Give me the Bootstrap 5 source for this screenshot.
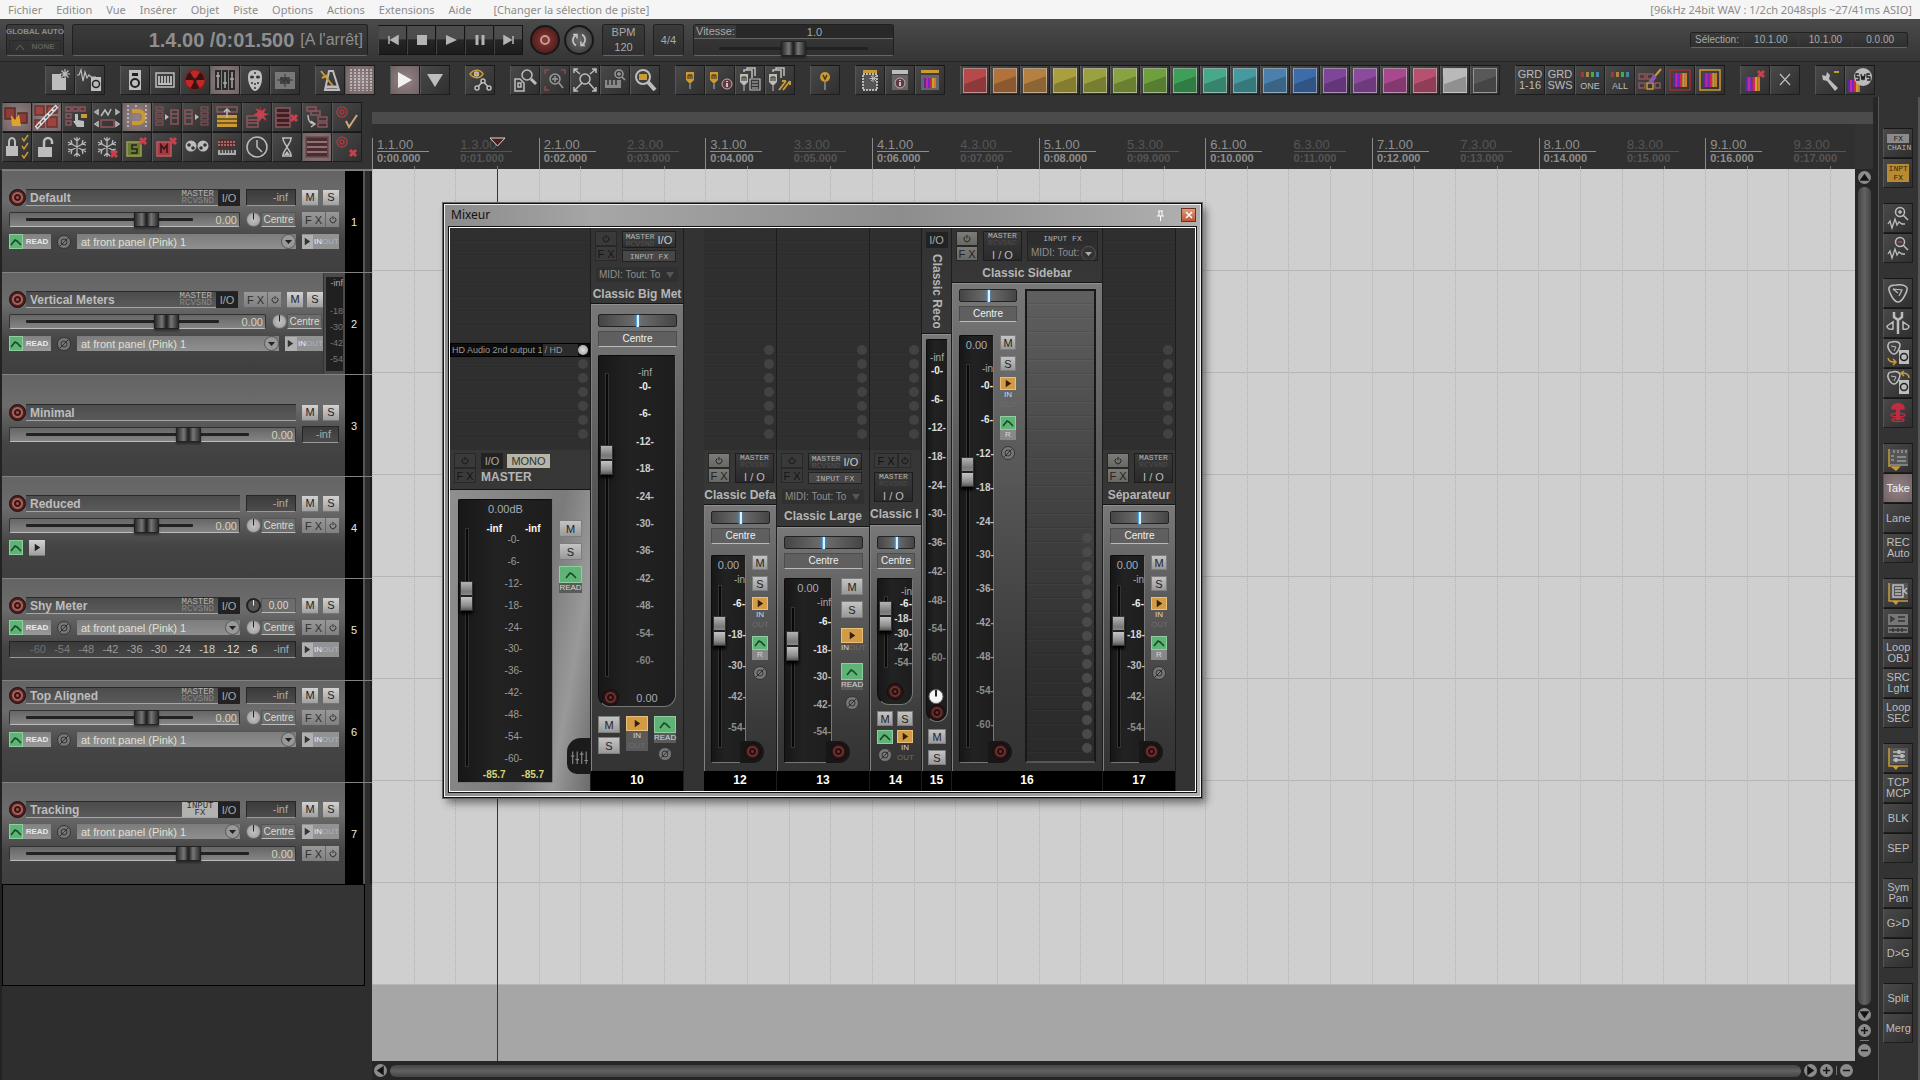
<!DOCTYPE html>
<html lang="fr">
<head>
<meta charset="utf-8">
<meta name="viewport" content="width=device-width, initial-scale=1">
<title>Mixeur</title>
<link href="https://cdn.jsdelivr.net/npm/bootstrap@5.3.0/dist/css/bootstrap.min.css" rel="stylesheet">
<style>
body{background:#333;color:#aaa;font-family:"Liberation Sans",Arial,sans-serif;font-size:11px;line-height:12px;overflow:hidden}
button,input,select{font:inherit;color:inherit;margin:0;padding:0;border:0;background:none;border-radius:0}
button{display:flex;align-items:center;justify-content:center;flex:none;white-space:nowrap}
svg{display:block;flex:none}
.minh0{min-height:0}.minw0{min-width:0}
.menu{background:#f5f5f5;height:19px;font-family:"Noto Sans",sans-serif;padding:0 8px;gap:14px}
.menu a,.menu span{color:#8c8c8c;text-decoration:none;font-size:11px;line-height:19px}
/* transport */
.transport{background:linear-gradient(#4a4a4a,#353535);height:43px;padding:0 12px 0 6px;border-bottom:1px solid #262626}
.inset{background:linear-gradient(#3b3b3b,#2f2f2f);border:1px solid #202020;border-bottom-color:#666;border-radius:3px}
.gauto{width:58px;height:32px;font-size:8px;font-weight:bold;color:#8d8d8d;white-space:nowrap;line-height:10px}
.gauto button{width:52px;height:13px;border:1px solid #2b2b2b;color:#5f5f5f;gap:6px}
.clock{width:296px;height:32px;font-size:20px;font-weight:bold;color:#8e8e8e;padding-right:4px}
.clock small{font-size:16px;font-weight:normal;margin-left:6px}
.tbar{margin:0 7px 0 10px}
.tbar button{width:29px;height:30px;background:linear-gradient(#4c4c4c 45%,#262626 50%,#1c1c1c);border:1px solid #151515;border-left-color:#444;color:#b4b4b4}
.round{width:30px;height:30px;border-radius:50%;border:2px solid #181818;background:radial-gradient(#6a6a6a,#333);color:#c4c4c4}
.round.red{background:radial-gradient(#8a3a36,#3c1412);color:#c59b98}
.bpm{width:43px;height:32px;line-height:15px}
.sig{width:31px;height:32px;margin-left:8px}
.rate{width:201px;height:32px;margin-left:9px}
.rate .top{background:#292929;height:14px;border-bottom:1px solid #666;margin-bottom:2px}
.rate .top label{width:42px;background:#3a3a3a;height:13px;padding-left:2px}
.selbox{width:218px;height:16px;font-size:10px}
.selbox output{flex:1;border-left:1px solid #3d3d3d;text-align:center}
/* toolbars */
.tools{height:35px;padding:3px 0 0 45px;gap:15px}
.tb{width:30px;height:30px;background:linear-gradient(135deg,#494949,#2f2f2f);border:1px solid #1d1d1d;border-top-color:#161616;border-left-color:#565656;color:#bdbdbd;font-size:11px;line-height:11px;text-align:center;white-space:normal}
.tb.on{background:radial-gradient(#968486,#706264);color:#f2f2f2}
.sw span{width:24px;height:25px;border:1px solid #cfcfcf88;display:block;background:linear-gradient(160deg,transparent 48%,#00000038 50%),var(--c)}
.left{width:372px;background:#2e2e2e}
.ltools{padding:5px 0 0 2px;height:72px;background:#333;display:grid;grid-template-columns:repeat(12,30px);align-content:start}
/* track control panel */
.tcp{border-left:2px solid #222;border-top:1px solid #777}
.track{height:102px;border-top:1px solid #828282}
.tbody{width:343px;background:linear-gradient(#646464,#6c6c6c 30%,#444 68%,#3f3f3f);padding-left:7px}
.tnum{width:18px;background:#000;color:#e8e8e8}
.tsep{width:9px;background:#2c2c2c;border-left:2px solid #555;border-right:2px solid #1c1c1c}
.trow{height:17px;gap:6px}
.tl{width:287px;gap:6px}.tr{width:37px}
.vm .tl{width:270px}.vm .panrow .tl{width:257px}
.vm .inb{width:38px}
.rec{width:17px;height:17px;border-radius:50%;background:radial-gradient(circle,#94514d 0 1px,#3c1614 2px 3px,#a5605b 4px 5px,#4e1f1d 6px);border:1px solid #170c0c;flex:none}
.rec.dk{background:radial-gradient(circle,#6a302e 0 1px,#241010 2px 3px,#6a302e 4px 5px,#2b1414 6px)}
.tname{flex:1;min-width:0;height:17px;background:linear-gradient(#4c4c4c,#5a5a5a);border-top:1px solid #2a2a2a;border-bottom:1px solid #a5a5a5}
.tname input{flex:1;min-width:0;width:60px;font-size:12px;font-weight:bold;color:#bdbdbd;padding-left:4px;height:15px}
.pix{font-family:"Liberation Mono",monospace;font-size:9px;line-height:7px;display:block;color:#b4b4b4}
.dim{color:#555}
.tname .dim{color:#888}
.iob{width:22px;height:16px;background:#222;color:#a9a9a9;font-size:11px}
.ifx{width:36px;height:15px;background:#b2b2b2}.ifx .pix{color:#333}
.tmeter{width:50px;height:17px;background:linear-gradient(#3b3b3b,#4c4c4c);border:1px solid #262626;border-bottom-color:#999;text-align:right;padding-right:7px;line-height:15px;flex:none}
.tmeter.tr{width:37px}
.ms{width:16px;height:16px;background:linear-gradient(#d2d2d2,#a0a0a0);color:#222;font-size:11px;border-bottom:1px solid #777}
.fx{background:linear-gradient(#999,#808080);color:#2f2f2f;height:15px;width:24px;font-size:11px;border-right:1px solid #666}
.pw{background:linear-gradient(#999,#808080);color:#2f2f2f;height:15px;width:13px}
.tslide{flex:1;height:15px;border:1px solid #333;border-bottom-color:#bbb;background:linear-gradient(#666,#848484);padding:0 2px 0 16px;border-radius:2px;color:#d3d3b8}
.tslide output{width:44px;text-align:right}
.tslide input{flex:1;min-width:0}
input[type=range]{-webkit-appearance:none;appearance:none}
.hr::-webkit-slider-runnable-track{height:3px;background:#222;border-radius:1px}
.hr{height:15px}
.hr::-webkit-slider-thumb{-webkit-appearance:none;width:25px;height:15px;margin-top:-6px;background:linear-gradient(90deg,#2b2b2b,#777 30%,#222 48% 52%,#777 70%,#2b2b2b);border:1px solid #222;box-shadow:0 2px 2px #0006}
.knob{width:15px;height:15px;border-radius:50%;background:linear-gradient(90deg,transparent 46%,#222 46% 54%,transparent 54%) top/100% 50% no-repeat,radial-gradient(#c2c2c2,#9c9c9c);border:1px solid #6a6a6a;flex:none}
.knob.dk{background:linear-gradient(90deg,transparent 46%,#eee 46% 54%,transparent 54%) top/100% 50% no-repeat,#555;border:2px solid #222}
.knob.wh{background:linear-gradient(90deg,transparent 46%,#222 46% 54%,transparent 54%) top/100% 50% no-repeat,#f4f4f4}
.panbox{width:50px;flex:none}
.panval{flex:1;min-width:0;height:15px;border:1px solid #555;border-bottom-color:#bbb;background:#6d6d6d;color:#dcdcc8;text-align:center;line-height:13px;font-size:10px}
.env{width:14px;height:15px;background:#5fb377;color:#174a26;border:1px solid #8fcf9d}
.readl{height:15px;width:28px;background:linear-gradient(#828282,#999);color:#e8e8e8;font-weight:bold;font-size:8px;text-align:center;line-height:15px}
.phase{width:14px;height:14px;border-radius:50%;border:1px solid #333;background:#777;color:#333}
.inp{flex:1;min-width:0;height:15px;position:relative;background:linear-gradient(#7c7c7c,#8f8f8f)}
.inp select{-webkit-appearance:none;appearance:none;width:100%;height:15px;padding:0 16px 0 4px;color:#e0e0d0}
.inp svg{position:absolute;right:0;top:0;pointer-events:none}
.inb{width:37px;height:15px;background:#929292;color:#eee;font-size:8px;justify-content:flex-start}
.inb i{width:12px;height:14px;background:#b0b0b0;color:#333;margin-right:1px}
.inb u{text-decoration:none;color:#b3b3b3}
.shy{flex:1;height:17px;background:linear-gradient(#393939,#464646);border:1px solid #222;border-bottom-color:#999;padding:0 6px 0 20px;line-height:15px}
.vmeter{width:22px;background:#4b4b4b;border-left:1px solid #333;padding:4px 2px}
.vmeter div{background:#202020;height:94px;font-size:9px;color:#777;text-align:right}
.vmeter span:first-child{color:#aaa}
.spare{height:102px;width:363px;background:#343434;border:1px solid #000}
/* ruler and arrange */
.band{height:12px;background:#4b4b4b;margin-top:15px}
.ruler{height:45px;background:#303030;margin-right:18px;overflow:hidden;padding-top:14px}
.rcell{flex:none;width:calc(1000px / 12);padding:0 0 0 4px;border-left:1px solid transparent;color:#555;white-space:nowrap;background:linear-gradient(#777,#777) 50% 100%/1px 3px no-repeat}
.rcell b{display:block;font-weight:normal;font-size:13px;line-height:13px;border-bottom:1px solid;width:52px}
.rcell em{font-style:normal;font-weight:bold;font-size:11px;line-height:12px;display:block}
.rcell.maj{color:#8e8e8e;border-left-color:#8a8a8a}
.arr{background:#a6a6a6}
.lane{height:102px;background:#cfcfcf;border-bottom:1px solid #b6b6b6}
.cols span{flex:none;width:calc(500px / 12);border-left:1px dotted #b2b2b2}
.cur{left:125px;width:1px;background:#5c2626}
.curtri{left:117px;top:13px}
.vs{width:18px;background:#262626;padding:2px 0 4px;gap:3px}
.hs{height:19px;background:#262626;padding:0 20px 0 2px;gap:3px}
.bar-v{flex:1;width:13px;border-radius:6px;background:linear-gradient(90deg,#444,#626262,#444)}
.bar-h{flex:1;height:12px;border-radius:6px;background:linear-gradient(#444,#626262,#444)}
.sep-h{width:9px;height:1px;background:#777}.sep-v{width:1px;height:9px;background:#777}
.sb{width:13px;height:13px;border-radius:50%;background:#8b8b8b;color:#151515}
.right{width:47px;background:#333;border-left:5px solid #262626;border-right:2px solid #555;box-shadow:inset 1px 0 #555;padding-top:31px;gap:15px}
.pk2{line-height:8px}
.pk2 .pix{width:22px;line-height:9px;font-size:8px}
.pk2.g .pix:first-child{background:#8b8b8b;color:#222}
.pk2.y .pix{background:#b88a34;color:#3a2808}
.cap{font-size:9px}
/* mixer window */
.mix{left:71px;top:34px;width:759px;height:595px;background:linear-gradient(90deg,#8b8b8b,#a6a6a6 20%,#8d8d8d 60%,#b0b0b0);border:1px solid #111;box-shadow:0 0 0 1px #666,4px 5px 8px #0007;padding:1px 5px 6px;outline:1px solid #eee;outline-offset:-2px}
.mtitle{height:22px;color:#111;font-size:12px;line-height:18px;font-family:"Noto Sans",sans-serif;padding:0 0 2px 2px}
.mtitle .x{width:15px;height:14px;background:linear-gradient(#dd9a80,#c25634);border:1px solid #70311d;color:#fff}
.mbody{height:565px;border:1px solid #fff;outline:1px solid #111;background:#333;overflow:hidden}
.strip{flex:none;border-right:1px solid #1d1d1d;background:#333}
.head{height:var(--head);flex:none;background:linear-gradient(#333,#373737);border-bottom:1px solid #151515;overflow:hidden}
.slots{height:222px;flex:none;background:repeating-linear-gradient(#2f2f2f 0 12px,#282828 13px,#3a3a3a 14px);padding-top:115px}
.send{height:14px;padding-right:2px;color:#999;font-size:10px;white-space:nowrap}
.dot{width:10px;height:10px;border-radius:50%;background:#424242;flex:none}
.dot.on{background:radial-gradient(#ddd,#999)}
.send.used{background:#0d0d0d;border:1px solid #000;padding:0 1px 0 1px;font-size:9px}
.send.used span:nth-child(2){background:#2b2b2b;flex:1;padding-left:2px}
.ctl{padding:3px 4px 0;gap:5px}
.fxv button{width:22px;height:15px;font-size:11px;background:#3a3a3a;color:#151515;border:1px solid #282828}
.fxv.on button{background:linear-gradient(#7b7b78,#686865);color:#222}
.fx.off,.pw.off{background:#3a3a3a;color:#111;border:1px solid #282828}
.route{width:39px;height:30px;background:linear-gradient(#3a3a3a,#2a2a2a);border:1px solid #1d1d1d;flex-direction:column;color:#bbb}
.route .pix{font-size:8px}.route .dim{color:#4c4c4c;margin-bottom:3px}
.wroute{width:54px;height:17px;background:linear-gradient(#454545,#2f2f2f);border:1px solid #1d1d1d;color:#ccc;gap:3px}
.wroute .pix,.wfx .pix,.sfx .pix{font-size:8px}
.wfx{width:54px;height:12px;background:#474747;border:1px solid #222;margin-top:2px}
.sfx{background:#2d2d2d;border:1px solid #222;width:73px;height:30px}
.sfx button{height:13px}
.mono{width:43px;height:14px;background:#b5b5a8;color:#333}
.midi{height:15px;background:#303030;margin:5px 5px 0;color:#8f8f8f;position:relative;overflow:hidden;font-size:10px}
.midi select{-webkit-appearance:none;appearance:none;width:100%;padding:0 15px 0 3px;height:15px;overflow:hidden}
.midi svg{position:absolute;right:1px;top:1px;pointer-events:none}
.sname{font-size:12px;font-weight:bold;color:#b5b5b5;line-height:16px;white-space:nowrap;overflow:hidden;margin:4px 0 0;text-align:center}
.sname.st{text-align:left}
.sname.vt{writing-mode:vertical-rl;height:74px;text-align:left;margin:6px 0 0}
.pan{flex:1;min-height:0;background:linear-gradient(#787878,#5a5a5a 35%,#3a3a3a 80%,#333);border-left:1px solid #808080;border-top:1px solid #909090;padding:var(--pt) 6px 8px}
.pans{height:13px;width:100%;border:1px solid #222;border-radius:2px;background:linear-gradient(90deg,#454545,#6e6e6e,#454545);flex:none}
.pans::-webkit-slider-thumb{-webkit-appearance:none;width:3px;height:12px;background:#dff0ff;box-shadow:0 0 3px #2f9be8;border-left:1px solid #4aa4e6}
.cen{height:16px;margin-top:4px;width:100%;border:1px solid #4c4c4c;border-bottom-color:#bbb;background:#5f5f5f;color:#f0f0f0;text-align:center;line-height:14px;flex:none;font-size:10px}
.mrow{flex:1;min-height:0;margin-top:var(--gap);gap:6px}
.mbox{width:var(--w);background:linear-gradient(90deg,#171717,#222 40%,#1d1d1d);border:1px solid #0c0c0c;border-right-color:#777;border-bottom-color:#777;position:relative;border-radius:2px;flex:none}
.mbox.bot{border-radius:2px 2px 12px 12px}
.rd{height:19px;line-height:18px;text-align:center;color:#a3acb8}
.fcol{flex:none;width:16px;padding:var(--ft) 0 var(--fb)}
.fader{writing-mode:vertical-lr;direction:rtl;width:15px;height:100%;min-height:0;display:block}
.fader::-webkit-slider-runnable-track{width:4px;background:#080808;border:1px solid #333}
.fader::-webkit-slider-thumb{-webkit-appearance:none;width:13px;height:30px;margin-left:-6px;background:linear-gradient(#b4b4b4,#777 35%,#8a8a8a 47%,#222 48% 52%,#c5c5c5 53%,#8d8d8d 85%,#5a5a5a);border:1px solid #333;box-shadow:0 3px 3px #000}
.scol{flex:1;min-width:0;padding:var(--it) 0 var(--sb);color:#aaa;font-size:10px}
.scale{flex:1;margin-top:var(--st);min-height:0}
.scale span{font-weight:bold}
.bump{position:absolute;right:-19px;bottom:-1px;width:24px;height:22px;border-radius:0 11px 11px 0;background:#171717;padding:2px 4px}
.foot{height:23px;padding-left:3px}
.side{gap:6px;width:16px}
.side.wd{width:22px}
.m1{width:100%;height:15px;background:linear-gradient(#c4c4c4,#999);color:#222;border:1px solid #7d7d7d;font-size:11px}
.m2 .m1{height:17px}
.pl{width:100%;height:13px;background:#d39b45;color:#33200a;border:1px solid #e8c07c}
.gr{width:100%;height:14px;background:#5fb377;color:#174a26;border:1px solid #8fcf9d}
.m2 .pl{height:15px}.m2 .gr{height:17px}
.tag{display:block;text-align:center;font-size:8px;line-height:10px;color:#d8d8d8}
.tag.o{color:#6d6d6d}.tag.bg{background:#5a5a5a}.tag.bl{background:#888}
.num{height:20px;background:#000;color:#fff;font-weight:bold;font-size:12px;line-height:19px;text-align:center;flex:none}
.side .phase,.brow .phase{margin:0 auto}
.brow{gap:6px;margin-top:9px;height:47px}
.brow>div{width:22px}
.bgrid{margin-top:6px;height:52px;display:grid;grid-template-columns:16px 16px;gap:4px;align-content:start}
.bgrid .phase{margin:0 auto}
.m15{gap:6px;margin:7px -1px -2px}
.w15{margin:0 -3px}
.mpan{background:linear-gradient(100deg,#8f8f8f,#7b7b7b 60%,#999 80%,#6b6b6b);padding:9px 6px 8px 8px;gap:6px}
.mpan .side{padding-top:21px;width:23px}
.mpan .scale span{font-weight:normal;color:#9c9c9c}
.peak{color:#d8d27a}
.fold{position:absolute;right:0;bottom:17px;width:23px;height:36px;background:#1b1b1b;border-radius:14px 0 0 10px;color:#888}
.bins{border:2px solid #181818;border-bottom-color:#555;background:repeating-linear-gradient(#0003 0 12px,#0005 13px,#ffffff08 14px);padding-top:240px}
.bins .dot{background:#4a4a4a}
</style>
</head>
<body class="vh-100 d-flex flex-column">
<nav class="menu d-flex" aria-label="Menu principal">
  <a href="#">Fichier</a><a href="#">Edition</a><a href="#">Vue</a><a href="#">Insérer</a><a href="#">Objet</a><a href="#">Piste</a><a href="#">Options</a><a href="#">Actions</a><a href="#">Extensions</a><a href="#">Aide</a><span class="ms-2">[Changer la sélection de piste]</span><span class="ms-auto">[96kHz 24bit WAV : 1/2ch 2048spls ~27/41ms ASIO]</span>
</nav>
<header class="transport d-flex align-items-center">
  <div class="gauto inset d-flex flex-column align-items-center justify-content-around">GLOBAL AUTO<button><svg width="10" height="8" viewBox="0 0 10 8"><path d="M1 7l4-5 4 5" stroke="#666" fill="none"/></svg>NONE</button></div>
  <div class="clock inset d-flex align-items-center justify-content-end ms-2">1.4.00 /0:01.500<small>[A l'arrêt]</small></div>
  <div class="tbar d-flex" id="tbar"></div>
  <button class="round red" aria-label="Enregistrer"><svg width="14" height="14" viewBox="0 0 14 14"><circle cx="7" cy="7" r="4" fill="none" stroke="currentColor" stroke-width="2"/></svg></button>
  <button class="round ms-1" aria-label="Boucle"><svg width="18" height="18" viewBox="0 0 18 18" fill="none" stroke="currentColor" stroke-width="1.6"><path d="M6 14.5A6 6 0 0 1 6 4M12 3.5A6 6 0 0 1 12 14"/><path d="M3 3.5h4v4M15 14.500h-4v-4"/></svg></button>
  <div class="bpm inset text-center ms-2">BPM<br>120</div>
  <div class="sig inset d-flex align-items-center justify-content-center">4/4</div>
  <div class="rate inset"><div class="top d-flex align-items-center"><label for="rate">Vitesse:</label><output class="flex-fill text-center">1.0</output></div><input id="rate" class="hr d-block mx-auto w-75" type="range" value="50"></div>
  <div class="selbox inset d-flex align-items-center ms-auto"><span class="px-1">Sélection:</span><output>10.1.00</output><output>10.1.00</output><output>0.0.00</output></div>
</header>
<div class="tools d-flex" id="tools"></div>
<main class="d-flex flex-fill minh0">
  <section class="left d-flex flex-column">
    <div class="ltools" id="ltools"></div>
    <div class="tcp flex-fill" id="tcp"></div>
  </section>
  <section class="flex-fill d-flex flex-column position-relative minw0">
    <div class="band"></div>
    <div class="position-relative"><div class="ruler d-flex" id="ruler"></div>
      <svg class="curtri position-absolute" width="17" height="10" viewBox="0 0 17 10"><path d="M1 1h15L8.500 9z" fill="#4a1f1f" stroke="#e5d5d5"/></svg></div>
    <div class="flex-fill d-flex minh0">
      <div class="arr flex-fill position-relative overflow-hidden minw0">
        <div class="position-relative overflow-hidden"><div id="lanes"></div><div class="cols position-absolute top-0 start-0 h-100 d-flex" id="cols"></div></div>
        <div class="cur position-absolute top-0 h-100"></div>
        <div class="mix position-absolute" role="dialog" aria-label="Mixeur">
          <div class="mtitle d-flex align-items-center"><span class="me-auto">Mixeur</span><svg class="me-3" width="9" height="11" viewBox="0 0 9 11"><path d="M2 1h5M3 1v5M6 1v5M1 6h7M4.500 6v5" stroke="#fff" fill="none"/></svg><button class="x" aria-label="Fermer"><svg width="8" height="8" viewBox="0 0 8 8"><path d="M1 1l6 6M7 1L1 7" stroke="currentColor" stroke-width="1.500"/></svg></button></div>
          <div class="mbody d-flex" id="mixer"></div>
        </div>
      </div>
      <div class="vs d-flex flex-column align-items-center" id="vs"></div>
    </div>
    <div class="hs d-flex align-items-center" id="hs"></div>
  </section>
  <aside class="right d-flex flex-column align-items-center" id="right"></aside>
</main>
<script src="https://cdn.jsdelivr.net/npm/bootstrap@5.3.0/dist/js/bootstrap.bundle.min.js"></script>
<script>
const $=id=>document.getElementById(id);
const svg=(b,s=28,v=28)=>`<svg width="${s}" height="${s}" viewBox="0 0 ${v} ${v}" fill="none" stroke="currentColor" stroke-width="1.5" aria-hidden="true">${b}</svg>`;
const F='fill="currentColor" stroke="none"', Y='#c99a35', P='#8f555b', R='#c8404c';
const rows=(x,y,n,w,c)=>Array.from({length:n},(_,i)=>`<rect x="${x}" y="${y+i*5}" width="${w}" height="3" stroke="${c}" stroke-width="1"/>`).join('');
const X=(x,y)=>`<path d="M${x} ${y}l6 6m0-6l-6 6" stroke="${R}" stroke-width="3"/>`;
const flake='<path stroke-width="1.2" d="M14 4v20M5 9l18 10M5 19L23 9M11 5l3 3 3-3M11 23l3-3 3 3M5 12l4-1-1-4M23 16l-4 1 1 4M5 16l4 1-1 4M23 12l-4-1 1-4"/>';
const rainbow=(x,y,w,h)=>['#5a2aa0','#c02a9a','#6a2ad0','#d02a4a','#c8a030','#d07a30'].map((c,i)=>`<rect x="${x+i*w/6}" y="${y}" width="${w/6}" height="${h}" fill="${c}" stroke="none"/>`).join('');
const marker=(x,y,c)=>`<path d="M${x} ${y}h8v8l-4 4-4-4z" fill="${c}" stroke="none"/><path d="M${x+4} ${y+12}v5" stroke-width="1"/><path d="M${x+2} ${y+7}v-4h4v4M${x+4} ${y+3}v4" stroke="#3a2a10" stroke-width="1"/>`;
const info=(x,y)=>`<circle cx="${x}" cy="${y}" r="5" fill="#5e3b42" stroke="#c9a9ae" stroke-width="1"/><path d="M${x} ${y-1}v4M${x} ${y-3}v1" stroke="#eee"/>`;
const disk=`<rect x="15" y="11" width="10" height="14" ${F}/><circle cx="20" cy="18" r="3.500" stroke="#222"/><circle cx="20" cy="18" r="1" fill="#222"/>`;
const pick=`<path d="M8 3c4-1 8 0 8 3s-3 9-6 9-7-6-6-9 2-3 4-3z"/><path d="M7 7l5 1-2 4" stroke-width="1"/>`;
const I={
 neu:`<path d="M6 8h9v4h5v12H6z" ${F}/><path d="M19 3v10M14 8h10M15.500 4.500l7 7M22.500 4.500l-7 7" stroke-width="1.200"/>`,
 wav:`<path d="M1 9h2l2-5 2 11 2-9 2 6 2-3 2 2h5" stroke-width="1.200"/>`+disk,
 spk:`<rect x="8" y="4" width="12" height="20" ${F}/><circle cx="14" cy="17" r="4" stroke="#222" stroke-width="2"/><rect x="11" y="7" width="6" height="3" fill="#222" stroke="none"/>`,
 pno:`<rect x="5" y="7" width="18" height="14"/><path d="M8 10v8M11 10v8M14 10v8M17 10v8M20 10v8M7 18h14" stroke-width="1.800"/>`,
 rad:`<circle cx="14" cy="14" r="10" fill="#3a1212" stroke="#7a2020"/><g fill="#c02828" stroke="none"><path d="M14 14L9 6a9 9 0 0 1 10 0zM14 14h9.500a9 9 0 0 1-5 8zM14 14H4.500a9 9 0 0 0 5 8z"/></g><circle cx="14" cy="14" r="2" fill="#222" stroke="none"/>`,
 mix:`<g fill="#2a2a2a" stroke="none"><rect x="4" y="4" width="6" height="20"/><rect x="11" y="4" width="6" height="20"/><rect x="18" y="4" width="6" height="20"/></g><path d="M7 6v16M14 6v16M21 6v16M5 10h4M12 17h4M19 13h4" stroke="#aaa"/>`,
 msk:`<path d="M14 4c6 0 7 3 7 9 0 6-4 12-7 12S7 18 7 12c0-5 1-8 7-8z" ${F}/><g fill="#333" stroke="none"><ellipse cx="11" cy="11" rx="2" ry="1.500"/><ellipse cx="17" cy="11" rx="2" ry="1.500"/><circle cx="11" cy="17" r="1"/><circle cx="14" cy="18" r="1"/><circle cx="17" cy="17" r="1"/><circle cx="14" cy="22" r="1"/><circle cx="14" cy="7" r="1"/></g>`,
 rck:`<rect x="4" y="6" width="20" height="17" fill="#777" stroke="none"/><rect x="9" y="11" width="10" height="7" fill="#444" stroke="none"/><path d="M14 8v3M14 18v3M6 14h3M19 14h3M9 14l2-2 2 4 2-4 2 4 2-2" stroke="#333" stroke-width="1"/>`,
 met:`<path d="M13 5h4l6 19H9z" stroke-width="2"/><path d="M10 21h12" stroke-width="3"/><path d="M5 5l12 15M6 12l6-3" stroke="${Y}" stroke-width="2"/>`,
 grd:`<path d="M5 3v22M9 3v22M13 3v22M17 3v22M21 3v22M25 3v22" stroke-dasharray="2 1" stroke-width="1"/>`,
 ply:`<path d="M7 6l14 8-14 8z" ${F}/>`, dwn:`<path d="M6 8h16l-8 13z" ${F}/>`,
 eye:`<path d="M4 8c4-5 10-5 13 0-3 5-9 5-13 0z" stroke="${Y}"/><circle cx="10.500" cy="8" r="2" fill="${Y}"/><path d="M11 22l6-7 6 7"/><circle cx="17" cy="15" r="2" fill="#333"/><circle cx="11" cy="22" r="2" fill="#333"/><circle cx="23" cy="22" r="2" fill="#333"/>`,
 zpg:`<circle cx="16" cy="9" r="5"/><path d="M20 13l5 5" stroke-width="3"/><path d="M4 13h5l4 4v8H4zM7 17h3v4H7z"/>`,
 zrd:`<path d="M4 8V4h4M24 8V4h-4M4 20v4h4" stroke="#8a4a4a"/><circle cx="14" cy="13" r="5" stroke="#999"/><path d="M11 13h6M14 10v6M18 17l4 5" stroke="#999"/>`,
 zex:`<circle cx="14" cy="13" r="5"/><path d="M3 3l6 5M25 3l-6 5M3 25l8-8M25 25l-7-8M3 7V3h4M21 3h4v4M3 21v4h4M21 25h4v-4"/>`,
 zrl:`<rect x="4" y="14" width="16" height="8" fill="#888" stroke="none"/><path d="M7 14v5M11 14v5M15 14v5" stroke="#333"/><circle cx="18" cy="8" r="4" stroke="#999"/><path d="M16 8h4M18 6v4M21 11l3 3" stroke="#999"/>`,
 zye:`<circle cx="12" cy="11" r="7" stroke-width="2"/><rect x="8" y="8" width="8" height="6" fill="${Y}" stroke="none"/><path d="M17 16l7 8" stroke-width="4"/>`,
 mk1:marker(10,6,Y),mk2:marker(4,6,Y)+info(21,18),
 mk3:`<path d="M8 6V4h8v8M11 4V2h8v8"/>`+marker(4,8,'#bbb')+`<path d="M14 13h10v11H14zM16 16h6M16 19h6M16 22h6" stroke-width="1.200"/>`,
 mk4:`<path d="M7 6V4h8v8M10 4V2h8v8"/>`+marker(3,8,'#bbb')+`<path d="M13 24l7-9M17 24l7-9M20 15h-4M24 15v4" stroke="${Y}" stroke-width="2"/>`,
 mkv:`<circle cx="14" cy="11" r="5" fill="${Y}" stroke="none"/><path d="M12 9l2 4 2-4" stroke="#4a3510"/><path d="M14 16v8" stroke-width="1"/>`,
 rg1:`<rect x="7" y="4" width="14" height="3" fill="${Y}" stroke="none"/><rect x="7" y="8" width="14" height="16" fill="#555" stroke="#ddd" stroke-dasharray="2 1"/><path d="M17 9v7M13.500 12.500h7M15 10l5 5M20 10l-5 5" stroke-width="1"/>`,
 rg2:`<rect x="6" y="4" width="16" height="4" ${F}/><rect x="6" y="9" width="16" height="15" fill="#666" stroke="none"/>`+info(14,17),
 rg3:`<rect x="5" y="4" width="18" height="3" fill="${Y}" stroke="none"/><rect x="5" y="9" width="18" height="15" fill="#666" stroke="none"/>`+rainbow(8,12,12,10),
 led:`<g stroke="none"><rect x="5" y="6" width="3" height="5" fill="#a33"/><rect x="10" y="6" width="3" height="5" fill="#a84"/><rect x="15" y="6" width="3" height="5" fill="#4a5"/><rect x="20" y="6" width="3" height="5" fill="#48a"/></g>`,
 brs:`<g stroke="${P}"><rect x="3" y="8" width="6" height="5"/><rect x="11" y="8" width="6" height="5"/><rect x="3" y="17" width="6" height="5"/><rect x="19" y="17" width="5" height="5"/></g><rect x="11" y="17" width="6" height="6" stroke="${Y}"/><path d="M25 3l-6 7" stroke="${Y}" stroke-width="2"/><path d="M19 10l-5 7" stroke="#8a5ab0" stroke-width="4"/>`,
 rb1:`<rect x="4" y="4" width="20" height="20" stroke="#9a3030"/>`+rainbow(7,7,14,14),
 rb2:`<rect x="4" y="4" width="20" height="20" stroke="${Y}"/>`+rainbow(7,7,14,14),
 rbx:rainbow(4,11,15,14)+X(17,5), xx:`<path d="M9 8l10 11M19 8L9 19" stroke-width="1.200"/>`,
 wrn:`<path d="M6 9l4 1 1-4 3 3-1 4 9 9-3 3-8-10-4-1z" ${F}/><path d="M18 6h5" stroke="${Y}" stroke-width="2"/>`,
 sws:rainbow(2,14,12,12)+`<circle cx="17" cy="11" r="9" fill="#bbb" stroke="none"/><path d="M13 8h-3v3h3v3h-3M15 8l1 6 1-4 1 4 1-6M24 8h-3v3h3v3h-3" stroke="#222" stroke-width="1.300"/>`,
 a1:`<g fill="#8d3b35" stroke="#5a2a26"><rect x="2" y="5" width="10" height="11"/><rect x="15" y="10" width="9" height="10"/></g><path d="M8 12l4 5 4-6 2 12h-9z" fill="#e0a526" stroke="none"/>`,
 a2:`<g fill="#9c4440" stroke="#6b302c"><rect x="2" y="3" width="9" height="9"/><rect x="14" y="3" width="10" height="7"/><rect x="2" y="17" width="9" height="7"/><rect x="14" y="14" width="10" height="10"/></g><path d="M3 25L24 3" stroke="#ddd" stroke-width="4"/><path d="M4 24L23 4" stroke="#555" stroke-dasharray="4 2"/>`,
 a3:`<g stroke="${P}"><rect x="3" y="4" width="5" height="4"/><rect x="10" y="4" width="5" height="4"/><rect x="17" y="4" width="5" height="4"/><rect x="3" y="11" width="5" height="4"/><rect x="3" y="18" width="5" height="4"/></g><rect x="18" y="11" width="6" height="4" fill="${Y}" stroke="none"/><path d="M12 11h3v6l6 1v6h-7l-4-6h2z" ${F}/>`,
 a4:`<path d="M8 13l4-6 3 5 3-6M2 9l3-2v4zM26 9l-3-2v4zM2 21l3-2v4zM26 21l-3-2v4z"/><rect x="8" y="17" width="13" height="7" stroke="${P}"/>`,
 a5:`<path d="M9 8h6a6 6 0 0 1 0 12H9" stroke="${Y}" stroke-width="4"/><path d="M5 2v24M13 2v4M23 2v24" stroke="#eee" stroke-dasharray="2 2" stroke-width="1"/>`,
 a6:rows(3,4,4,7,P)+`<path d="M12 11l4 3-4 3z" ${F}/><rect x="18" y="7" width="7" height="14" stroke="${P}"/><path d="M18 11h7M18 15h7" stroke="${P}"/>`,
 a7:`<rect x="2" y="7" width="7" height="14" stroke="${P}"/><path d="M2 11h7M2 15h7" stroke="${P}"/><path d="M12 11l4 3-4 3z" ${F}/>`+rows(18,4,4,7,P),
 a8:`<rect x="4" y="4" width="20" height="5" stroke="${P}"/><rect x="4" y="12" width="20" height="12" fill="${Y}" stroke="none"/><path d="M4 16h20M4 20h20" stroke="#5a4515"/><path d="M14 15V6M11 9l3-3 3 3"/>`,
 a9:`<rect x="4" y="13" width="11" height="11" stroke="${P}"/><path d="M4 17h11M4 20h11" stroke="${P}"/><path d="M17 3l1 5 5-3-2 5 5 1-5 2 3 5-5-3-3 4-1-6-5-1 5-3-3-4 5 2z" fill="${R}" stroke="none"/>`,
 a10:`<rect x="3" y="5" width="14" height="19" fill="#3c2024" stroke="${P}"/><path d="M3 10h14M3 15h14M3 20h14" stroke="${P}"/>`+X(18,12),
 a11:`<g stroke="${P}"><rect x="4" y="4" width="9" height="4"/><rect x="8" y="8" width="9" height="4"/><rect x="15" y="14" width="9" height="4"/><rect x="15" y="20" width="9" height="4"/></g><path d="M5 12c0 5 1 8 6 9M8 18l4 3-4 3"/>`,
 a12:`<circle cx="9" cy="9" r="5" stroke="#a33a42"/><circle cx="9" cy="9" r="2" stroke="#a33a42"/><path d="M13 18l3 6 8-12" stroke="#c8a87c" stroke-width="2"/>`,
 b1:`<rect x="3" y="13" width="12" height="10" ${F}/><path d="M6 13V9a3 4 0 0 1 6 0v4" stroke-width="2"/><path d="M19 5l2 3 4-6M19 13l2 3 4-6M19 22l2 3 4-6" stroke="${Y}"/>`,
 b2:`<rect x="5" y="14" width="14" height="10" ${F}/><path d="M11 14V9a4 4 0 0 1 8 0v2" stroke-width="2.500"/>`,
 b3:flake,b4:flake+X(18,18),
 b5:`<rect x="4" y="9" width="14" height="14" fill="#6b7a30" stroke="#99a050"/><path d="M14 12H9v4h5v4H8" stroke="#222"/>`+X(17,5),
 b6:`<rect x="4" y="9" width="14" height="14" fill="#a33a44" stroke="#c05a60"/><path d="M8 20v-8l3 4 3-4v8" stroke="#3a1010"/>`+X(17,5),
 b7:`<circle cx="8" cy="13" r="5.500" ${F}/><circle cx="20" cy="13" r="5.500" ${F}/><g fill="#333" stroke="none"><circle cx="6" cy="12" r="1.800"/><circle cx="10" cy="15" r="1.800"/><circle cx="18" cy="15" r="1.800"/><circle cx="22" cy="12" r="1.800"/></g>`,
 b8:`<rect x="5" y="6" width="18" height="9" fill="#5c2a2c" stroke="none"/><path d="M5 9h18M5 12h18" stroke="#b08080" stroke-dasharray="2 1"/><rect x="5" y="17" width="18" height="5" fill="#aaa" stroke="none"/><path d="M8 17v3M11 17v3M14 17v3M17 17v3M20 17v3" stroke="#333"/>`,
 b9:`<circle cx="14" cy="14" r="10"/><path d="M14 7v7l5 5"/>`,
 b10:`<path d="M9 5h10M9 23h10M10 5c0 5 3 6 4 9-1 3-4 4-4 9M18 5c0 5-3 6-4 9 1 3 4 4 4 9"/><path d="M11 22l3-4 3 4z" ${F}/>`,
 b11:`<rect x="3" y="4" width="22" height="20" fill="#4a2c30" stroke="#6b4a4e"/><path d="M4 9h20M4 14h20M4 19h20" stroke="#a8898c"/>`,
 b12:`<circle cx="9" cy="9" r="5" stroke="#a33a42"/><circle cx="9" cy="9" r="2" stroke="#a33a42"/>`+X(17,17),
 zi:`<path d="M4 20l2-3 2 7 3-9 2 6 2-3 3 2h3" stroke-width="1.300"/><circle cx="16" cy="8" r="4.500"/><path d="M14 8h4M16 6v4M19 11l5 5" />`,
 zo:`<path d="M4 20l2-3 2 7 3-9 2 6 2-3 3 2h3" stroke-width="1.300"/><circle cx="16" cy="8" r="4.500"/><path d="M14 8h4" stroke="${R}"/><path d="M19 11l5 5"/>`,
 pk:`<path d="M12 6c7-1 12 1 11 5s-5 12-9 12S6 15 5 11s3-5 7-5z"/><path d="M9 10l9 1-3 6M9 10l5 4" stroke-width="1.200"/>`,
 pw:`<path d="M10 3v5l4 3 4-3V3M14 11v14" stroke-width="2.500"/><path d="M3 17l6-4v7c-4 1-6-1-6-3zM25 17l-6-4v7c4 1 6-1 6-3z"/>`,
 pd:pick+disk+`<path d="M4 19c1 4 4 4 7 4M9 20l3 3-3 3" stroke="${Y}"/>`,
 du:pick+disk+`<path d="M25 9c0-4-3-5-7-5M20 2l-3 2 3 3" stroke="${Y}"/>`,
 nk:`<g fill="#c22b40" stroke="none"><path d="M7 10c0-8 14-8 14 0 0 1-14 1-14 0z"/><rect x="12" y="9" width="4" height="12"/></g><ellipse cx="14" cy="16" rx="7" ry="1.800" stroke="#c22b40"/><ellipse cx="14" cy="21" rx="6" ry="1.500" stroke="#c22b40"/>`,
 t1:`<rect x="5" y="5" width="19" height="15" fill="#555" stroke="none"/><path d="M5 5v18" stroke="${Y}"/><path d="M8 23h7l-3 3z" fill="${Y}" stroke="${Y}"/><path d="M10 6v3M14 6v3M18 6v3M22 6v3M7 12h3M7 16h3M13 13h9M13 17h9" stroke-width="1"/><path d="M5 21h19" stroke="#999"/>`,
 t2:`<rect x="5" y="4" width="19" height="16" fill="#555" stroke="none"/><path d="M5 4v18h19" stroke="${Y}"/><path d="M8 22h7l-3 4z" fill="${Y}" stroke="none"/><path d="M9 6h10v12H9zM11 9h6M11 12h6M11 15h6M23 9l-3 3 3 3"/>`,
 t3:`<rect x="4" y="5" width="20" height="11" fill="#777" stroke="none"/><rect x="4" y="18" width="20" height="6" fill="#777" stroke="none"/><path d="M7 8l3 2-3 2zM14 8h7M14 12h7M5 21h18M9 19v4M14 19v4M18 19v4" stroke="#333"/>`,
 t4:`<rect x="5" y="4" width="19" height="16" fill="#555" stroke="none"/><path d="M5 4v18h19" stroke="${Y}"/><path d="M8 22h7l-3 4z" fill="${Y}" stroke="none"/><path d="M9 8h12M9 12h12M9 16h12"/><path d="M15 6v4M18 10v4M12 14v4" stroke-width="3"/>`
};
const tb=(k,on)=>{const t=k.startsWith('=');return `<button class="tb${on?' on':''}" aria-label="${t?k.slice(1):'Outil '+k}">${t?k.slice(1):svg(I[k])}</button>`};
const grp=(a,c='d-flex')=>`<div class="${c}">${a.map(k=>tb(k.replace('*',''),k.includes('*'))).join('')}</div>`;
const sw=['#b5494c','#b3713c','#b58143','#a9a03d','#9aa23f','#88a33f','#6fa03e','#3f9f58','#48a88c','#459a9f','#4a80ab','#3d6cab','#7f4599','#8c4a9f','#a8498f','#b8506f','#b9b9b9','#585858'];
const led=t=>`<button class="tb cap flex-column"><svg width="24" height="13" viewBox="2 2 24 13">${I.led}</svg>${t}</button>`;
$('tools').innerHTML=grp(['neu','wav'])+grp(['spk','pno','rad','mix*','msk','rck'])+grp(['met','grd*'])+grp(['ply*','dwn'])+grp(['eye'])+grp(['zpg','zrd','zex','zrl','zye'])+grp(['mk1','mk2','mk3','mk4'])+grp(['mkv'])+grp(['rg1','rg2','rg3'])
 +`<div class="d-flex">${sw.map((c,i)=>`<button class="tb sw" aria-label="Couleur ${i+1}"><span style="--c:${c}"></span></button>`).join('')}</div>`
 +`<div class="d-flex">${tb('=GRD 1-16')}${tb('=GRD SWS')}${led('ONE')}${led('ALL')}${['brs','rb1','rb2'].map(k=>tb(k)).join('')}</div>`
 +grp(['rbx','xx'])+grp(['wrn','sws']);
$('ltools').innerHTML=['a1*','a2*','a3','a4','a5*','a6','a7','a8','a9','a10','a11','a12','b1','b2','b3','b4','b5','b6','b7','b8','b9','b10','b11*','b12'].map(k=>tb(k.replace('*',''),k.includes('*'))).join('');
$('tbar').innerHTML=['<path d="M3 3v8M12 3L5 7l7 4z" fill="currentColor"/>','<rect x="2" y="2" width="10" height="10" fill="currentColor" stroke="none"/>','<path d="M2 2l11 5-11 5z" fill="currentColor" stroke="none"/>','<path d="M4 2v10M10 2v10" stroke-width="3"/>','<path d="M11 3v8M2 3l7 4-7 4z" fill="currentColor"/>'].map((b,i)=>`<button aria-label="Transport ${i+1}">${svg(b,14,14)}</button>`).join('');
const pixb=(a,b,c)=>`<button class="tb pk2 ${c} flex-column"><span class="pix">${a}</span><span class="pix">${b}</span></button>`;
const v='d-flex flex-column';
$('right').innerHTML=`<div class="${v}">${pixb('FX','CHAIN','g')}${pixb('INPT','FX','y')}</div>`+grp(['zi','zo'],v)+grp(['pk','pw','pd','du','nk'],v)+grp(['t1','=Take*','=Lane','=REC Auto'],v)+grp(['t2','t3','=Loop OBJ','=SRC Lght','=Loop SEC'],v)+grp(['t4','=TCP MCP','=BLK','=SEP'],v)+grp(['=Sym Pan','=G&gt;D','=D&gt;G'],v)+grp(['=Split','=Merg'],v);
/* ruler */
let r='';for(let i=0;i<18;i++){const m=Math.floor(i/2)+1;r+=`<div class="rcell${i%2?'':' maj'}"><b>${m}.${i%2?3:1}.00</b><em>0:${String(i).padStart(2,'0')}.000</em></div>`}
$('ruler').innerHTML=r;$('lanes').innerHTML='<div class="lane"></div>'.repeat(8);$('cols').innerHTML='<span></span>'.repeat(60);
const sb=(d,l)=>`<button class="sb" aria-label="${l}">${svg(d,11,11)}</button>`;
const plus='<path d="M2 5.500h7M5.500 2v7" stroke-width="1.500"/>',minus='<path d="M2 5.500h7"/>';
$('vs').innerHTML=sb('<path d="M2 8l3.500-5 3.500 5z" fill="#111"/>','Haut')+'<div class="bar-v"></div>'+sb('<path d="M2 3l3.500 5 3.500-5z" fill="#111"/>','Bas')+sb(plus,'Zoom +')+'<i class="sep-h"></i>'+sb(minus,'Zoom -');
$('hs').innerHTML=sb('<path d="M8 2L3 5.500 8 9z" fill="#111"/>','Gauche')+'<div class="bar-h"></div>'+sb('<path d="M3 2l5 3.500L3 9z" fill="#111"/>','Droite')+sb(plus,'Zoom +')+'<i class="sep-v"></i>'+sb(minus,'Zoom -');
/* tracks */
const pwr=svg('<path d="M4 3a3.500 3.500 0 1 0 4 0M6 1v4" stroke-width="1.200"/>',10,12);
const envi=svg('<path d="M1 9l4-5 2 1 4 4" stroke-width="1.600"/>',12,12);
const phi=svg('<circle cx="6" cy="6" r="3" stroke-width="1"/><path d="M2 10l8-8" stroke-width="1"/>',12,12);
const tri=svg('<path d="M3 2l6 4-6 4z" fill="currentColor" stroke="none"/>',11,12);
const dd=(c='#999',a='#222')=>`<svg width="15" height="15" viewBox="0 0 15 15"><circle cx="7.500" cy="7.500" r="7" fill="${c}" stroke="#555"/><path d="M4 6h7l-3.500 4z" fill="${a}"/></svg>`;
const rec='<button class="rec" aria-label="Armer"></button>',M='<button class="ms" aria-label="Muet">M</button><button class="ms" aria-label="Solo">S</button>';
const MS=`<div class="tr d-flex justify-content-between">${M}</div>`;
const FXB='<button class="fx" aria-label="FX">F X</button><button class="pw" aria-label="FX actif">'+pwr+'</button>';
const FX=`<div class="tr d-flex">${FXB}</div>`;
const name=(n,x='')=>`<div class="d-flex flex-fill">${rec}<div class="tname d-flex align-items-center"><input type="text" value="${n}" aria-label="Nom de piste">${x}</div></div>`;
const route='<span><span class="pix">MASTER</span><span class="pix dim">RCVSND</span></span><button class="iob ms-1">I/O</button>';
const inf='<output class="tmeter">-inf</output>';
const sld='<div class="tslide d-flex align-items-center"><input class="hr" type="range" value="76" aria-label="Volume"><output>0.00</output></div>';
const pan='<div class="panbox d-flex"><button class="knob" aria-label="Panoramique"></button><output class="panval">Centre</output></div>';
const read='<div class="d-flex"><button class="env" aria-label="Enveloppes">'+envi+'</button><span class="readl">READ</span></div><button class="phase" aria-label="Phase">'+phi+'</button>';
const inp='<div class="inp"><select aria-label="Entrée"><option>at front panel (Pink) 1</option></select>'+dd()+'</div>';
const IN='<button class="inb"><i class="d-flex align-items-center">'+tri+'</i>IN<u>OUT</u></button>';
const row=(l,rr,c='')=>`<div class="trow d-flex align-items-center ${c}"><div class="tl d-flex align-items-center">${l}</div>${rr}</div>`;
const T=[
 ['Default',18,row(name('Default',route)+inf,MS)+row(sld+pan,FX)+row(read+inp,IN)],
 ['Vertical Meters',18,`<div class="trow d-flex align-items-center"><div style="width:229px" class="d-flex">${name('Vertical Meters',route)}</div><div class="d-flex">${FXB}</div><div class="d-flex gap-1">${M}</div></div>`+row(sld,pan,'panrow')+row(read+inp,IN),'vm'],
 ['Minimal',29,row(name('Minimal'),MS)+row(sld,'<output class="tmeter tr">-inf</output>')],
 ['Reduced',18,row(name('Reduced')+inf,MS)+row(sld+pan,FX)+row('<button class="env" aria-label="Enveloppes">'+envi+'</button><button class="ms" aria-label="Ecoute">'+tri+'</button>','')],
 ['Shy Meter',18,row(name('Shy Meter',route)+pan.replace('knob','knob dk').replace('Centre','0.00'),MS)+row(read+inp+pan,FX)+row('<div class="shy d-flex justify-content-between">'+[60,54,48,42,36,30,24,18,12,6].map((n,i)=>`<span style="color:rgb(${[0,0,0].map(()=>110+i*14)})">-${n}</span>`).join('')+'<span class="ps-2">-inf</span></div>',IN)],
 ['Top Aligned',6,row(name('Top Aligned',route)+inf,MS)+row(sld+pan,FX)+row(read+inp,IN)],
 ['Tracking',18,row(name('Tracking','<button class="ifx flex-column"><span class="pix">INPUT</span><span class="pix">FX</span></button><button class="iob">I/O</button>')+inf,MS)+row(read+inp+pan,IN)+row(sld,FX)]
];
$('tcp').innerHTML=T.map(([n,p,h,c],i)=>`<div class="track d-flex"><div class="tbody ${c||''} d-flex justify-content-between"><div class="d-flex flex-column" style="padding-top:${p}px;gap:5px">${h}</div>${c?'<div class="vmeter"><div class="d-flex flex-column"><span class="mb-3">-inf</span><span class="mb-1">-18</span><span class="mb-1">-30</span><span class="mb-1">-42</span><span>-54</span></div></div>':''}</div><div class="tnum d-flex align-items-center justify-content-center">${i+1}</div><div class="tsep"></div></div>`).join('')+'<div class="spare"></div>';
/* mixer strips */
const slots=u=>`<div class="slots">${Array.from({length:7},(_,i)=>`<div class="send d-flex align-items-center justify-content-end${u&&!i?' used':''}">${u&&!i?'<span>HD Audio 2nd output 1</span><span>/ HD</span><span class="dot on"></span>':'<span class="dot"></span>'}</div>`).join('')}</div>`;
const fxv=on=>`<div class="fxv${on?' on':''}"><button aria-label="FX actif">${pwr}</button><button>F X</button></div>`;
const rt='<button class="route"><span class="pix">MASTER</span><span class="pix dim">RCVSND</span>I / O</button>';
const wr='<div><button class="wroute"><span><span class="pix">MASTER</span><span class="pix dim">RCVSND</span></span>I/O</button><button class="wfx"><span class="pix">INPUT FX</span></button></div>';
const ctl=h=>`<div class="ctl d-flex">${h}</div>`;
const midi='<div class="midi"><select aria-label="Entrée MIDI"><option>MIDI: Tout: To</option></select><svg width="14" height="13" viewBox="0 0 14 13"><path d="M3 4h8l-4 6z" fill="#555"/></svg></div>';
const sn=n=>`<div class="sname">${n}</div>`;
const pans='<input class="pans" type="range" value="50" aria-label="Panoramique"><output class="cen">Centre</output>';
const dk='<button class="rec dk" aria-label="Armer"></button>';
const sc=(a,inf,c='text-end')=>`<div class="scol d-flex flex-column ${c}"><span>${inf}</span><div class="scale d-flex flex-column justify-content-between">${a.map((n,i)=>{const g=Math.max(125,238-Math.round(i*120/a.length));return `<span style="color:rgb(${g},${g},${g})">-${n}-</span>`}).join('')}</div></div>`;
const fd=v=>`<div class="fcol"><input class="fader" type="range" value="${v}" aria-label="Volume"></div>`;
const vars=(ft,fb,it,st,sb2)=>`--ft:${ft}px;--fb:${fb}px;--it:${it}px;--st:${st}px;--sb:${sb2}px`;
const box=(w,vs,rd,body,cls='',post='')=>`<div class="mbox d-flex flex-column ${cls}" style="--w:${w}px;${vs}">${rd?`<div class="rd">${rd}</div>`:''}<div class="d-flex flex-fill minh0">${body}</div>${post}</div>`;
const bump=`<div class="bump">${dk}</div>`;
const m1='<button class="m1" aria-label="Muet">M</button><button class="m1" aria-label="Solo">S</button>';
const ph='<button class="phase" aria-label="Phase">'+phi+'</button>';
const inout='<span class="tag">IN</span><span class="tag o">OUT</span>';
const side=`<div class="side d-flex flex-column">${m1}<div><button class="pl" aria-label="Ecoute">${tri}</button>${inout}</div><div><button class="gr" aria-label="Enveloppes">${envi}</button><span class="tag bl">R</span></div>${ph}</div>`;
const full=[0,6,12,18,24,30,36,42,48,54,60],part=[6,18,30,42,54];
const strip=(n,w,head,hh,pt,gap,body)=>`<div class="strip d-flex flex-column" style="width:${w}px;--head:${hh}px;--pt:${pt}px;--gap:${gap}px"><div class="head">${head}</div><div class="pan d-flex flex-column">${body}</div><div class="num">${n}</div></div>`;
const S12=(n,nm)=>strip(n,73,slots()+ctl(fxv(1)+rt)+sn(nm),277,5,11,pans+`<div class="mrow d-flex">${box(35,vars(11,14,0,12,28),'0.00',fd(77)+sc(part,'-in'),'',bump)}${side}</div>`);
$('mixer').innerHTML=
`<div class="strip d-flex flex-column position-relative" style="width:141px;--head:262px"><div class="head">${slots(1)}${ctl(fxv(0)+'<div><div class="d-flex align-items-center gap-1"><button class="iob">I/O</button><button class="mono">MONO</button></div><div class="sname st m-0">MASTER</div></div>')}</div>
 <div class="mpan flex-fill d-flex minh0">${box(95,vars(10,15,5,-1,1),'0.00dB',fd(75)+`<div class="scol d-flex flex-column text-center"><div class="d-flex justify-content-around fw-bold text-light"><span>-inf</span><span>-inf</span></div><div class="scale d-flex flex-column justify-content-between">${full.map(n=>`<span>-${n}-</span>`).join('')}</div><div class="d-flex justify-content-around mt-1 fw-bold peak"><span>-85.7</span><span>-85.7</span></div></div>`)}
 <div class="side m2 d-flex flex-column">${m1}<div><button class="gr" aria-label="Enveloppes">${envi}</button><span class="tag bg">READ</span></div></div></div>
 <div class="fold d-flex align-items-center justify-content-center">${svg('<path d="M3 5v14M8 5v14M13 5v14M18 5v14M1 10h4M6 14h4M11 8h4M16 15h4" stroke-width="1.300"/>',18,20)}</div></div>`
+strip(10,93,ctl(fxv(0)+wr)+midi+sn('Classic Big Met'),76,9,8,pans+`<div class="mrow d-flex">${box(78,vars(17,12,11,2,22),'',fd(74)+sc(full,'-inf','text-center'),'bot','<div class="foot d-flex align-items-center">'+dk+'<output class="flex-fill text-center">0.00</output></div>')}</div>
 <div class="brow m2 d-flex"><div class="d-flex flex-column gap-1">${m1}</div><div><button class="pl" aria-label="Ecoute">${tri}</button><div class="tag bg">${inout}</div></div><div><button class="gr" aria-label="Enveloppes">${envi}</button><span class="tag bg mb-1">READ</span>${ph}</div></div>`)
+`<div style="width:20px"></div>`
+S12(12,'Classic Defa')
+strip(13,93,slots()+ctl(fxv(0)+wr)+midi+sn('Classic Large'),299,8,9,pans+`<div class="mrow d-flex">${box(48,vars(10,14,0,7,24),'0.00',fd(79)+sc(part,'-inf'),'',bump)}<div class="side wd m2 d-flex flex-column ms-auto">${m1}<div class="mt-1"><button class="pl" aria-label="Ecoute">${tri}</button><span class="tag">IN<span class="tag o d-inline">OUT</span></span></div><div class="mt-1"><button class="gr" aria-label="Enveloppes">${envi}</button><span class="tag bg">READ</span></div>${ph}</div></div>`)
+strip(14,52,slots()+ctl('<div><div class="d-flex mb-1"><button class="fx off">F X</button><button class="pw off">'+pwr+'</button></div>'+rt+'</div>')+'<div class="sname st">Classic I</div>',297,10,9,pans+`<div class="mrow d-flex">${box(36,vars(17,36,7,0,35),'',fd(89)+sc(part,'-in'),'bot','<div class="position-absolute bottom-0 start-50 translate-middle-x mb-1">'+dk+'</div>')}</div>
 <div class="bgrid">${m1}<div><button class="gr mb-1" aria-label="Enveloppes">${envi}</button>${ph}</div><div><button class="pl" aria-label="Ecoute">${tri}</button>${inout}</div></div>`)
+strip(15,30,'<div class="d-flex flex-column align-items-center pt-1"><button class="iob">I/O</button><div class="sname vt">Classic Reco</div></div>',106,4,0,`<div class="mrow d-flex w15">${box(22,vars(0,0,12,1,57),'',sc(full,'-inf','text-center'),'bot','<div class="position-absolute bottom-0 start-50 translate-middle-x"><button class="knob wh" aria-label="Panoramique"></button>'+dk+'</div>')}</div><div class="d-flex flex-column m15">${m1}</div>`)
+strip(16,151,ctl(fxv(1)+rt+'<div class="sfx"><button class="w-100"><span class="pix">INPUT FX</span></button><div class="midi m-0"><select aria-label="Entrée MIDI"><option>MIDI: Tout:</option></select>'+dd('#333','#aaa')+'</div></div>')+sn('Classic Sidebar'),55,5,13,`<div class="d-flex flex-fill minh0 gap-2"><div class="d-flex flex-column" style="width:58px">${pans}<div class="mrow d-flex">${box(35,vars(10,14,9,5,31),'0.00',fd(74)+sc(full,'-in'),'',bump)}${side}</div></div><div class="bins flex-fill">${'<div class="send d-flex align-items-center justify-content-end"><span class="dot"></span></div>'.repeat(16)}</div></div>`)
+S12(17,'Séparateur');
</script>
</body>
</html>
